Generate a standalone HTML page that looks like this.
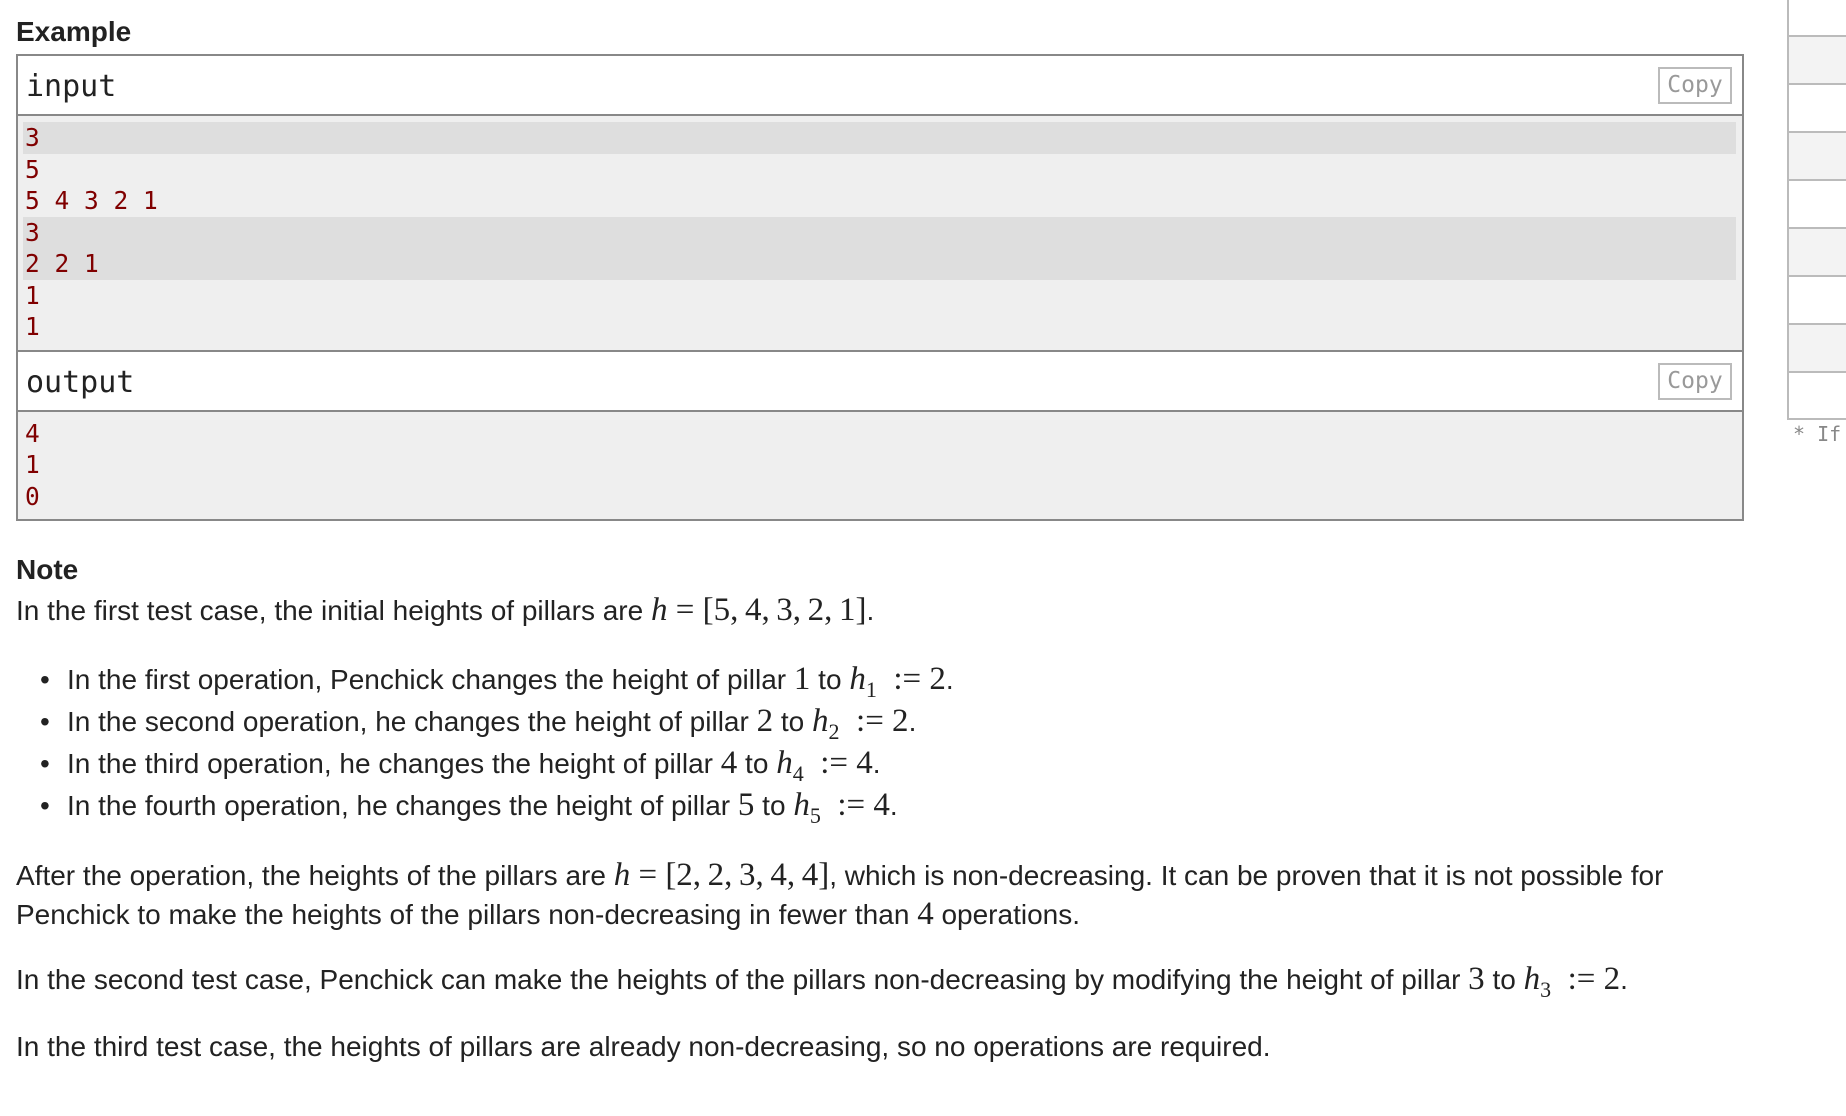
<!DOCTYPE html>
<html><head><meta charset="utf-8"><style>
*{margin:0;padding:0;box-sizing:border-box}
body{width:1846px;height:1116px;background:#fff;position:relative;overflow:hidden;font-family:"Liberation Sans",Arial,sans-serif;color:#222}
.abs{position:absolute}
h3{position:absolute;font-size:28px;font-weight:bold;color:#222}
.box{position:absolute;left:16px;width:1728px;border:2px solid #888}
.ttl{height:60px;border-bottom:2px solid #888;font-family:"DejaVu Sans Mono","Liberation Mono",monospace;font-size:30px;padding-left:8px;line-height:62px;position:relative;background:#fff}
.copy{position:absolute;right:10px;top:11px;width:74px;height:37px;border:2px solid #bbb;color:#999;font-family:"DejaVu Sans Mono",monospace;font-size:23px;line-height:33px;text-align:center}
.cnt{background:#efefef;padding:6px 6px 7px 5px;font-family:"DejaVu Sans Mono","Liberation Mono",monospace;font-size:24.5px;color:#800000}
.ln{height:31.5px;line-height:31.5px;padding-left:2px}
.hl{background:#dedede}
.side{position:absolute;left:1787px;width:80px;border-left:2px solid #bbb;border-bottom:2px solid #bbb}
.side div{height:48px;border-top:2px solid #bbb}
.g{background:#f3f3f3}
.t{position:absolute;left:16px;font-size:28px;white-space:nowrap;line-height:36px}
.m{font-family:"Liberation Serif",serif;font-size:33px;line-height:20px}
.i{font-style:italic}
sub{font-size:22px;vertical-align:-8px;line-height:0}
.bl{height:42px;line-height:42px;position:relative;padding-left:27px}
.bl:before{content:"•";position:absolute;left:0;top:0}
</style></head><body>
<h3 style="left:16px;top:16px">Example</h3>
<div class="box" style="top:54px">
 <div class="ttl">input<div class="copy">Copy</div></div>
 <div class="cnt">
  <div class="ln hl">3</div><div class="ln">5</div><div class="ln">5 4 3 2 1</div>
  <div class="ln hl">3</div><div class="ln hl">2 2 1</div><div class="ln">1</div><div class="ln">1</div>
 </div>
 <div class="ttl" style="border-top:2px solid #888;height:62px">output<div class="copy">Copy</div></div>
 <div class="cnt" style="padding-top:6px;padding-bottom:7px">
  <div class="ln">4</div><div class="ln">1</div><div class="ln">0</div>
 </div>
</div>
<div class="side" style="top:-14px;height:434px">
 <div style="border-top:none;height:49px"></div><div class="g"></div><div></div><div class="g"></div><div></div><div class="g"></div><div></div><div class="g"></div><div></div>
</div>
<div class="abs" style="left:1793px;top:422px;font-family:'DejaVu Sans Mono',monospace;font-size:20px;color:#888;white-space:nowrap">* If y</div>
<h3 style="left:16px;top:554px">Note</h3>
<div class="t" style="top:593px">In the first test case, the initial heights of pillars are <span class="m"><span class="i">h</span> = [5,&#8201;4,&#8201;3,&#8201;2,&#8201;1]</span>.</div>
<div class="abs" style="left:40px;top:659px;font-size:28px;white-space:nowrap">
<div class="bl">In the first operation, Penchick changes the height of pillar <span class="m">1</span> to <span class="m"><span class="i">h</span><sub>1</sub>&nbsp; := 2</span>.</div>
<div class="bl">In the second operation, he changes the height of pillar <span class="m">2</span> to <span class="m"><span class="i">h</span><sub>2</sub>&nbsp; := 2</span>.</div>
<div class="bl">In the third operation, he changes the height of pillar <span class="m">4</span> to <span class="m"><span class="i">h</span><sub>4</sub>&nbsp; := 4</span>.</div>
<div class="bl">In the fourth operation, he changes the height of pillar <span class="m">5</span> to <span class="m"><span class="i">h</span><sub>5</sub>&nbsp; := 4</span>.</div>
</div>
<div class="t" style="top:856px;line-height:39px">After the operation, the heights of the pillars are <span class="m"><span class="i">h</span> = [2,&#8201;2,&#8201;3,&#8201;4,&#8201;4]</span>, which is non-decreasing. It can be proven that it is not possible for<br>Penchick to make the heights of the pillars non-decreasing in fewer than <span class="m">4</span> operations.</div>
<div class="t" style="top:962px">In the second test case, Penchick can make the heights of the pillars non-decreasing by modifying the height of pillar <span class="m">3</span> to <span class="m"><span class="i">h</span><sub>3</sub>&nbsp; := 2</span>.</div>
<div class="t" style="top:1029px">In the third test case, the heights of pillars are already non-decreasing, so no operations are required.</div>
</body></html>
